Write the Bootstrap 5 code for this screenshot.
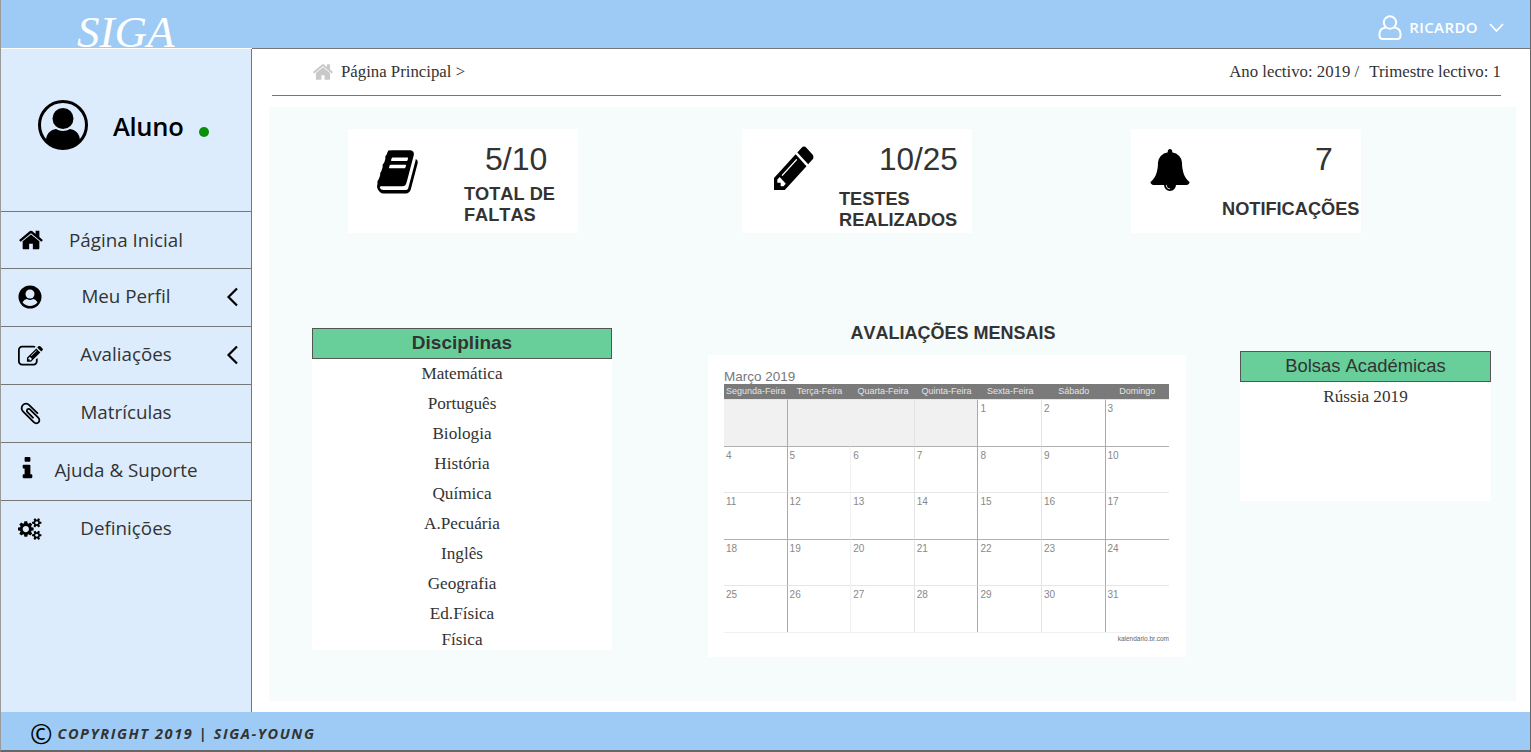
<!DOCTYPE html>
<html lang="pt">
<head>
    <meta charset="UTF-8">
    <meta name="viewport" content="width=device-width, initial-scale=1.0">
    <title>SIGA</title>
    <link href="https://cdn.jsdelivr.net/npm/bootstrap@5.3.0/dist/css/bootstrap.min.css" rel="stylesheet">
    <style>
        html, body { height: 100%; overflow: hidden; }
        body { font-family: "Liberation Sans", Arial, sans-serif; color: #333; background: #fff; }
        .siga-page { height: 752px; border-left: 1px solid #999; border-right: 1px solid #666; border-bottom: 2px solid #666; }

        /* header */
        .siga-top { height: 48px; background: #9dcbf5; padding: 0; flex-wrap: nowrap; }
        .siga-logo { font-family: "Liberation Serif", serif; font-style: italic; font-size: 45px; line-height: 48px; color: #fff; margin-left: 76px; padding: 0; position: relative; top: 8px; }
        .siga-logo:hover { color: #fff; }
        .siga-user { color: #fff; font-family: "Open Sans", sans-serif; font-weight: 600; font-size: 15px; margin-right: 26px; padding-top: 6px; letter-spacing: .4px; }
        .siga-user .user-label { margin-left: 7px; margin-right: 11px; }

        /* sidebar */
        .siga-side { width: 251px; flex: none; background: #dcecfd; border-right: 1px solid #777; margin-top: 1px; }
        .side-who { height: 162px; padding: 51px 0 0 37px; }
        .side-name { font-family: "Open Sans", sans-serif; font-weight: 600; font-size: 25.500px; color: #000; margin: 1px 0 0 25px; line-height: 50px; letter-spacing: -.3px; }
        .side-dot { width: 10px; height: 10px; background: #0a8f0a; border-radius: 50%; margin: 27px 0 0 16px; }
        .side-link { display: grid; grid-template-columns: 50px 1fr 50px; align-items: center; height: 58px; border-top: 1px solid #777; color: #333; font-family: "Open Sans", sans-serif; font-size: 18.800px; text-align: center; padding: 0 0 2px; text-decoration: none; }
        .side-link:first-child { height: 57px; padding-bottom: 0; }
        .side-link:hover { color: #333; }
        .side-ico { display: block; margin-left: 17px; fill: #000; }
        .side-ico.ico-info { margin-left: 13px; margin-top: -4px; }
        .side-ico.ico-edit { margin-top: 3px; }
        .side-ico.ico-clip { margin-top: 2px; }
        .side-arrow { display: block; margin-left: 25px; }

        /* main */
        .siga-main { border-top: 1px solid #777; min-width: 0; }
        .crumbs { height: 47px; margin: 0 29px 0 20px; padding: 0 0 0 40px; border-bottom: 1px solid #777; font-family: "Liberation Serif", serif; font-size: 16.800px; color: #333; }
        .crumbs svg { fill: #c9c9c9; margin-right: 7px; }
        .crumbs .gap-bar { margin-right: 10px; }
        .panel-area { height: 594px; margin: 11px 14px 0 17px; background: #f6fbfb; padding-top: 22px; }

        /* stat boxes */
        .stat-row { padding-left: 79px; gap: 164px; height: 104px; }
        .stat-row .stat-bell { margin-left: -5px; }
        .stat-box { width: 230px; height: 104px; background: #fff; }
        .stat-box svg { fill: #000; display: block; }
        .stat-ico { flex: none; }
        .stat-text { padding-top: 13px; white-space: nowrap; }
        .stat-num { display: block; font-size: 32px; line-height: 34px; color: #333; }
        .stat-label { display: block; font-size: 18.200px; line-height: 21px; font-weight: 700; color: #333; font-kerning: none; }
        .stat-book .stat-ico { width: 116px; padding: 21px 0 0 29px; }
        .stat-book .stat-num { margin-left: 21px; }
        .stat-book .stat-label { margin-top: 8px; }
        .stat-pen .stat-ico { width: 97px; padding: 17px 0 0 32px; }
        .stat-pen .stat-num { margin-left: 40px; font-size: 31.500px; }
        .stat-pen .stat-label { margin-top: 13px; }
        .stat-bell .stat-ico { width: 91px; padding: 19px 0 0 18px; }
        .stat-bell .stat-num { margin-left: 93px; }
        .stat-bell .stat-label { margin-top: 23px; }

        /* lower panels */
        .lower-row { padding-left: 43px; margin-top: 95px; }
        .subjects { width: 300px; height: 322px; border: 0; border-radius: 0; background: #fff; }
        .card .green-head { background: #68cf9b; border: 1px solid #555; border-radius: 0; height: 31px; line-height: 28px; text-align: center; font-size: 18.400px; padding: 0; color: #333; font-kerning: none; }
        .card .green-head.head-big { font-size: 19px; }
        .subjects .list-group-item { border: 0; padding: 0; height: 30px; line-height: 30px; text-align: center; background: transparent; font-family: "Liberation Serif", serif; font-size: 17.200px; color: #333; }
        .subjects .list-group-item:last-child { height: 21px; line-height: 22px; }
        .cal-col { width: 478px; margin-left: 96px; }
        .cal-title { font-size: 18px; font-weight: 700; line-height: 20px; color: #333; text-align: center; margin: -5px 0 0 12px; height: 32px; white-space: nowrap; font-kerning: none; }
        .cal-sheet { background: #fff; height: 302px; padding: 15px 17px 0 16px; color: #777; }
        .cal-month { font-size: 13.500px; line-height: 14px; color: #777; }
        .cal-grid { display: grid; grid-template-columns: repeat(7, 63.6px); }
        .cal-grid > div { height: 46.500px; font-size: 10px; line-height: 11px; padding: 3px 0 0 2px; color: #888; border-top: 1px solid #e6e6e6; border-right: 1px solid #e4e4e4; }
        .cal-grid > div:nth-child(7n) { border-right: 0; }
        .cal-grid > div.cal-day { height: 15.300px; background: #7a7a7a; color: #e4e4e4; padding: 2px 0 0; text-align: center; font-size: 9px; border: 0; white-space: nowrap; }
        .cal-grid > div.cal-off { background: #f1f1f1; }
        .cal-grid > div.line-dark { border-top-color: #b0b0b0; }
        .cal-grid > div:nth-child(7n+1), .cal-grid > div:nth-child(7n+4), .cal-grid > div:nth-child(7n+6) { border-right-color: #aaa; }
        .cal-grid > div:nth-child(7n+2) { border-right-color: #f2f2f2; }
        .cal-grid > div.cal-off:nth-child(7n+2) { border-right-color: #f1f1f1; }
        .cal-foot { font-size: 6.500px; line-height: 12px; text-align: right; color: #666; border-top: 1px solid #f0f0f0; }
        .grants { width: 251px; height: 150px; margin: 23px 0 0 54px; border: 0; border-radius: 0; background: #fff; }
        .grants .grant-line { font-family: "Liberation Serif", serif; font-size: 17.200px; line-height: 30px; text-align: center; color: #333; }

        /* footer */
        .siga-foot { height: 38px; background: #9dcbf5; padding: 5px 0 0 29px; font-family: "Open Sans", sans-serif; font-weight: 700; font-style: italic; font-size: 14.500px; color: #333; letter-spacing: 1.600px; }
        .siga-foot .copy-mark { font-style: normal; font-weight: 400; font-size: 27px; line-height: 24px; color: #000; margin-right: 5px; letter-spacing: 0; }
    </style>
</head>
<body>
<div class="siga-page d-flex flex-column">

    <!-- Top bar -->
    <nav class="navbar siga-top justify-content-between">
        <a class="navbar-brand siga-logo" href="#">SIGA</a>
        <div class="siga-user d-flex align-items-center">
            <svg width="24" height="25" viewBox="0 0 24 25" fill="none" stroke="#fff" stroke-width="2"><circle cx="12" cy="7.5" r="6.2"/><path d="M8 12.500C4 13 1.500 15.500 1.500 19v1.500c0 2 1.500 3.500 3.500 3.500h14c2 0 3.500-1.500 3.500-3.500V19c0-3.500-2.500-6-6.500-6.500"/></svg>
            <span class="user-label">RICARDO</span>
            <svg width="15" height="11" viewBox="0 0 15 11" fill="none" stroke="#fff" stroke-width="1.800"><path d="M1 2l6.500 7L14 2"/></svg>
        </div>
    </nav>

    <div class="d-flex flex-grow-1">
        <!-- Sidebar -->
        <aside class="siga-side">
            <div class="side-who d-flex align-items-start">
                <svg width="50" height="50" viewBox="0 0 50 50"><circle cx="25" cy="25" r="23.500" fill="none" stroke="#000" stroke-width="3"/><circle cx="25" cy="18.500" r="10.500"/><path d="M8 41c0-7 4-11 10-12 4 2.500 10 2.500 14 0 6 1 10 5 10 12-4 5-11 8-17 8s-13-3-17-8z"/></svg>
                <span class="side-name">Aluno</span>
                <span class="side-dot d-block"></span>
            </div>
            <nav class="nav flex-column">
                <a class="side-link" href="#">
                    <svg class="side-ico" width="26" height="26" viewBox="0 0 1792 1792"><path d="M1472 992v480q0 26-19 45t-45 19h-384v-384h-256v384h-384q-26 0-45-19t-19-45v-480q0-1 .5-3t.5-3l575-474 575 474q1 2 1 6zm223-69l-62 74q-8 9-21 11h-3q-13 0-21-7l-692-577-692 577q-12 8-24 7-13-2-21-11l-62-74q-8-10-7-23.500t11-21.500l719-599q32-26 76-26t76 26l244 204v-195q0-14 9-23t23-9h192q14 0 23 9t9 23v408l219 182q10 8 11 21.500t-7 23.500z"/></svg>
                    <span>Página Inicial</span><span></span>
                </a>
                <a class="side-link" href="#">
                    <svg class="side-ico" width="24" height="24" viewBox="0 0 24 24"><circle cx="12" cy="12" r="11.500"/><circle cx="12" cy="9" r="4.500" fill="#dcecfd"/><path d="M4.500 17.500c1-2.500 3.500-3.500 4.500-3.500 2 1.200 4 1.200 6 0 1 0 3.500 1 4.500 3.500-4 4.500-11 4.500-15 0z" fill="#dcecfd"/></svg>
                    <span>Meu Perfil</span>
                    <svg class="side-arrow" width="13" height="20" viewBox="0 0 13 20" fill="none" stroke="#000" stroke-width="2.200"><path d="M11 1.500L2.500 10l8.500 8.500"/></svg>
                </a>
                <a class="side-link" href="#">
                    <svg class="side-ico ico-edit" width="25" height="25" viewBox="0 0 1792 1792"><path d="M888 1184l116-116-152-152-116 116v56h96v96h56zm440-720q-16-16-33 1l-350 350q-17 17-1 33t33-1l350-350q17-17 1-33zm80 594v190q0 119-84.500 203.500t-203.500 84.500h-832q-119 0-203.500-84.500t-84.500-203.500v-832q0-119 84.500-203.500t203.500-84.500h832q63 0 117 25 15 7 18 23 3 17-9 29l-49 49q-14 14-32 8-23-6-45-6h-832q-66 0-113 47t-47 113v832q0 66 47 113t113 47h832q66 0 113-47t47-113v-126q0-13 9-22l64-64q15-15 35-7t20 29zm-96-738l288 288-672 672h-288v-288zm444 132l-92 92-288-288 92-92q28-28 68-28t68 28l152 152q28 28 28 68t-28 68z"/></svg>
                    <span>Avaliações</span>
                    <svg class="side-arrow" width="13" height="20" viewBox="0 0 13 20" fill="none" stroke="#000" stroke-width="2.200"><path d="M11 1.500L2.500 10l8.500 8.500"/></svg>
                </a>
                <a class="side-link" href="#">
                    <svg class="side-ico ico-clip" width="25" height="25" viewBox="0 0 1792 1792"><path d="M1596 1385q0 117-79 196t-196 79q-135 0-235-100l-777-776q-113-115-113-271 0-159 110-270t269-111q158 0 273 113l605 606q10 10 10 22 0 16-30.500 46.500t-46.500 30.500q-13 0-23-10l-606-607q-79-77-181-77-106 0-179 75t-73 181q0 105 76 181l776 777q63 63 145 63 64 0 106-42t42-106q0-82-63-145l-581-581q-26-24-60-24-29 0-48 19t-19 48q0 32 25 59l410 410q10 10 10 22 0 16-31 47t-47 31q-12 0-22-10l-410-410q-63-61-63-149 0-82 57-139t139-57q88 0 149 63l581 581q100 98 100 235z"/></svg>
                    <span>Matrículas</span><span></span>
                </a>
                <a class="side-link" href="#">
                    <svg class="side-ico ico-info" width="27" height="27" viewBox="0 0 1792 1792"><path d="M1216 1344v128q0 26-19 45t-45 19h-512q-26 0-45-19t-19-45v-128q0-26 19-45t45-19h64v-384h-64q-26 0-45-19t-19-45v-128q0-26 19-45t45-19h384q26 0 45 19t19 45v576h64q26 0 45 19t19 45zm-128-1152v192q0 26-19 45t-45 19h-256q-26 0-45-19t-19-45v-192q0-26 19-45t45-19h256q26 0 45 19t19 45z"/></svg>
                    <span>Ajuda &amp; Suporte</span><span></span>
                </a>
                <a class="side-link" href="#">
                    <svg class="side-ico" width="25" height="22" viewBox="0 0 2048 1792"><path d="M896 896q0-106-75-181t-181-75-181 75-75 181 75 181 181 75 181-75 75-181zm768 512q0-52-38-90t-90-38-90 38-38 90q0 53 37.500 90.500t90.500 37.500 90.500-37.500 37.500-90.500zm0-1024q0-52-38-90t-90-38-90 38-38 90q0 53 37.500 90.500t90.500 37.500 90.500-37.500 37.500-90.500zm-384 421v185q0 10-7 19.500t-16 10.500l-155 24q-11 35-32 76 34 48 90 115 7 11 7 20 0 12-7 19-23 30-82.500 89.500t-78.500 59.500q-11 0-21-7l-115-90q-37 19-77 31-11 108-23 155-7 24-30 24h-186q-11 0-20-7.500t-10-17.500l-23-153q-34-10-75-31l-118 89q-7 7-20 7-11 0-21-8-144-133-144-160 0-9 7-19 10-14 41-53t47-61q-23-44-35-82l-152-24q-10-1-17-9.500t-7-19.500v-185q0-10 7-19.500t16-10.500l155-24q11-35 32-76-34-48-90-115-7-11-7-20 0-12 7-20 22-30 82-89t79-59q11 0 21 7l115 90q34-18 77-32 11-108 23-154 7-24 30-24h186q11 0 20 7.500t10 17.500l23 153q34 10 75 31l118-89q8-7 20-7 11 0 21 8 144 133 144 160 0 8-7 19-12 16-42 54t-45 60q23 48 34 82l152 23q10 2 17 10.500t7 19.500zm640 533v140q0 16-149 31-12 27-30 52 51 113 51 138 0 4-4 7-122 71-124 71-8 0-46-47t-52-68q-20 2-30 2t-30-2q-14 21-52 68t-46 47q-2 0-124-71-4-3-4-7 0-25 51-138-18-25-30-52-149-15-149-31v-140q0-16 149-31 13-29 30-52-51-113-51-138 0-4 4-7 4-2 35-20t59-34 30-16q8 0 46 46.500t52 67.500q20-2 30-2t30 2q51-71 92-112l6-2q4 0 124 70 4 3 4 7 0 25-51 138 17 23 30 52 149 15 149 31zm0-1024v140q0 16-149 31-12 27-30 52 51 113 51 138 0 4-4 7-122 71-124 71-8 0-46-47t-52-68q-20 2-30 2t-30-2q-14 21-52 68t-46 47q-2 0-124-71-4-3-4-7 0-25 51-138-18-25-30-52-149-15-149-31v-140q0-16 149-31 13-29 30-52-51-113-51-138 0-4 4-7 4-2 35-20t59-34 30-16q8 0 46 46.500t52 67.500q20-2 30-2t30 2q51-71 92-112l6-2q4 0 124 70 4 3 4 7 0 25-51 138 17 23 30 52 149 15 149 31z"/></svg>
                    <span>Definições</span><span></span>
                </a>
            </nav>
        </aside>

        <!-- Main -->
        <main class="siga-main flex-grow-1">
            <div class="crumbs d-flex justify-content-between align-items-center">
                <div class="d-flex align-items-center">
                    <svg width="22" height="22" viewBox="0 0 1792 1792"><path d="M1472 992v480q0 26-19 45t-45 19h-384v-384h-256v384h-384q-26 0-45-19t-19-45v-480q0-1 .5-3t.5-3l575-474 575 474q1 2 1 6zm223-69l-62 74q-8 9-21 11h-3q-13 0-21-7l-692-577-692 577q-12 8-24 7-13-2-21-11l-62-74q-8-10-7-23.500t11-21.500l719-599q32-26 76-26t76 26l244 204v-195q0-14 9-23t23-9h192q14 0 23 9t9 23v408l219 182q10 8 11 21.500t-7 23.500z"/></svg>
                    <span>Página Principal &gt;</span>
                </div>
                <div><span class="gap-bar">Ano lectivo: 2019 /</span><span>Trimestre lectivo: 1</span></div>
            </div>

            <div class="panel-area">
                <div class="stat-row d-flex">
                    <div class="stat-box stat-book d-flex">
                        <div class="stat-ico">
                            <svg width="41" height="44" viewBox="60 120 1680 1560" preserveAspectRatio="none"><path d="M1703 478q40 57 18 129l-275 906q-19 64-76.500 107.500t-122.500 43.500h-923q-77 0-148.500-53.500t-99.500-131.500q-24-67-2-127 0-4 3-27t4-37q1-8-3-21.500t-3-19.500q2-11 8-21t16.500-23.500 16.500-23.500q23-38 45-91.500t30-91.500q3-10 .5-30t-.5-28q3-11 17-28t17-23q21-36 42-92t25-90q1-9-2.500-32t.5-28q4-13 22-30.500t22-22.500q19-26 42.500-84.500t27.500-96.500q1-8-3-25.500t-2-26.500q2-8 9-18t18-23 17-21q8-12 16.500-30.500t15-35 16-36 19.500-32 26.500-23.500 36-11.500 47.500 5.500l-1 3q38-9 51-9h761q74 0 114 56t18 130l-274 906q-36 119-71.500 153.500t-128.500 34.500h-869q-27 0-38 15-11 16-1 43 24 70 144 70h923q29 0 56-15.500t35-41.500l300-987q7-22 5-57 38 15 59 43zm-1064 2q-4 13 2 22.500t20 9.500h608q13 0 25.500-9.500t16.500-22.500l21-64q4-13-2-22.500t-20-9.500h-608q-13 0-25.500 9.500t-16.500 22.500zm-83 256q-4 13 2 22.500t20 9.500h608q13 0 25.500-9.500t16.500-22.500l21-64q4-13-2-22.500t-20-9.500h-608q-13 0-25.500 9.500t-16.500 22.500z"/></svg>
                        </div>
                        <div class="stat-text">
                            <span class="stat-num">5/10</span>
                            <span class="stat-label">TOTAL DE<br>FALTAS</span>
                        </div>
                    </div>
                    <div class="stat-box stat-pen d-flex">
                        <div class="stat-ico">
                            <svg width="40" height="44" viewBox="128 128 1536 1536" preserveAspectRatio="none"><path d="M491 1536l91-91-235-235-91 91v107h128v128h107zm523-928q0-22-22-22-10 0-17 7l-542 542q-7 7-7 17 0 22 22 22 10 0 17-7l542-542q7-7 7-17zm-54-192l416 416-832 832h-416v-416zm683 96q0 53-37 90l-166 166-416-416 166-165q36-38 90-38 53 0 91 38l235 234q37 39 37 91z"/></svg>
                        </div>
                        <div class="stat-text">
                            <span class="stat-num">10/25</span>
                            <span class="stat-label">TESTES<br>REALIZADOS</span>
                        </div>
                    </div>
                    <div class="stat-box stat-bell d-flex">
                        <div class="stat-ico">
                            <svg width="42" height="44" viewBox="0 0 1792 1792"><path d="M912 1696q0-16-16-16-59 0-101.500-42.500t-42.500-101.500q0-16-16-16t-16 16q0 73 51.500 124.500t124.500 51.500q16 0 16-16zm816-288q0 52-38 90t-90 38h-448q0 106-75 181t-181 75-181-75-75-181h-448q-52 0-90-38t-38-90q50-42 91-88t85-119.500 74.500-158.500 50-206 19.500-260q0-152 117-282.500t307-158.500q-8-19-8-39 0-40 28-68t68-28 68 28 28 68q0 20-8 39 190 28 307 158.500t117 282.500q0 139 19.500 260t50 206 74.500 158.500 85 119.500 91 88z"/></svg>
                        </div>
                        <div class="stat-text">
                            <span class="stat-num">7</span>
                            <span class="stat-label">NOTIFICAÇÕES</span>
                        </div>
                    </div>
                </div>

                <div class="lower-row d-flex align-items-start">
                    <div class="card subjects">
                        <div class="card-header green-head head-big fw-bold">Disciplinas</div>
                        <ul class="list-group list-group-flush">
                            <li class="list-group-item">Matemática</li>
                            <li class="list-group-item">Português</li>
                            <li class="list-group-item">Biologia</li>
                            <li class="list-group-item">História</li>
                            <li class="list-group-item">Química</li>
                            <li class="list-group-item">A.Pecuária</li>
                            <li class="list-group-item">Inglês</li>
                            <li class="list-group-item">Geografia</li>
                            <li class="list-group-item">Ed.Física</li>
                            <li class="list-group-item">Física</li>
                        </ul>
                    </div>

                    <div class="cal-col">
                        <div class="cal-title">AVALIAÇÕES MENSAIS</div>
                        <div class="cal-sheet">
                            <div class="cal-month">Março 2019</div>
                            <div class="cal-grid">
                                <div class="cal-day">Segunda-Feira</div><div class="cal-day">Terça-Feira</div><div class="cal-day">Quarta-Feira</div><div class="cal-day">Quinta-Feira</div><div class="cal-day">Sexta-Feira</div><div class="cal-day">Sábado</div><div class="cal-day">Domingo</div>
                                <div class="cal-off"></div><div class="cal-off"></div><div class="cal-off"></div><div class="cal-off"></div><div>1</div><div>2</div><div>3</div>
                                <div class="line-dark">4</div><div class="line-dark">5</div><div class="line-dark">6</div><div class="line-dark">7</div><div class="line-dark">8</div><div class="line-dark">9</div><div class="line-dark">10</div>
                                <div>11</div><div>12</div><div>13</div><div>14</div><div>15</div><div>16</div><div>17</div>
                                <div class="line-dark">18</div><div class="line-dark">19</div><div class="line-dark">20</div><div class="line-dark">21</div><div class="line-dark">22</div><div class="line-dark">23</div><div class="line-dark">24</div>
                                <div>25</div><div>26</div><div>27</div><div>28</div><div>29</div><div>30</div><div>31</div>
                            </div>
                            <div class="cal-foot">kalendario.br.com</div>
                        </div>
                    </div>

                    <div class="card grants">
                        <div class="card-header green-head">Bolsas Académicas</div>
                        <div class="grant-line">Rússia 2019</div>
                    </div>
                </div>
            </div>
        </main>
    </div>

    <!-- Footer -->
    <footer class="siga-foot d-flex align-items-center">
        <span class="copy-mark">©</span><span>COPYRIGHT 2019 | SIGA-YOUNG</span>
    </footer>
</div>
<script src="https://cdn.jsdelivr.net/npm/bootstrap@5.3.0/dist/js/bootstrap.bundle.min.js"></script>
</body>
</html>
